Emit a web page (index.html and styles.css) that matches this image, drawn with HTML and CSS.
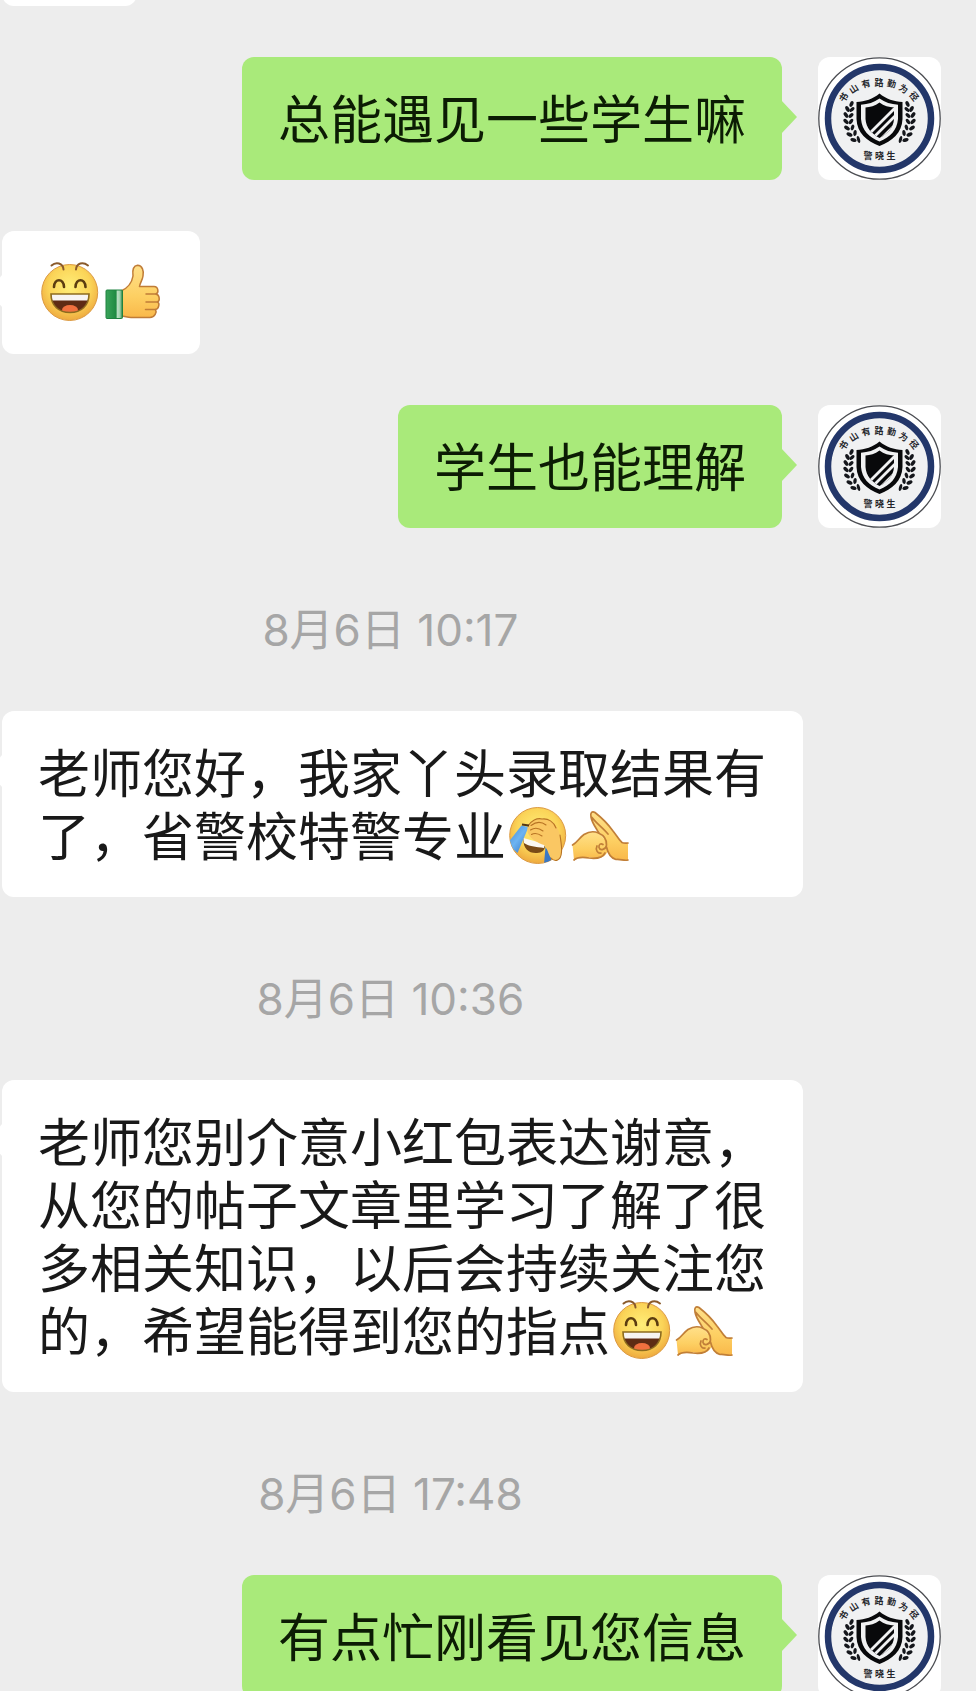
FILE: index.html
```html
<!DOCTYPE html>
<html lang="zh-CN">
<head>
<meta charset="utf-8">
<meta name="viewport" content="width=device-width, initial-scale=1">
<title>聊天</title>
<link rel="stylesheet" href="styles.css">
</head>
<body>
<svg class="sprites" aria-hidden="true">
  <defs>
    <radialGradient id="skin" cx="50%" cy="40%" r="62%">
      <stop offset="0" stop-color="#ffee78"/><stop offset="0.6" stop-color="#fbd458"/><stop offset="1" stop-color="#eda63c"/>
    </radialGradient>
    <linearGradient id="hand" x1="0" y1="0" x2="0" y2="1">
      <stop offset="0" stop-color="#ffe08a"/><stop offset="0.6" stop-color="#fdcf62"/><stop offset="1" stop-color="#f9b84a"/>
    </linearGradient>
    <linearGradient id="cuff" x1="0" y1="0" x2="1" y2="0">
      <stop offset="0" stop-color="#3aa45a"/><stop offset="0.6" stop-color="#1f8a42"/><stop offset="0.7" stop-color="#b9dfc3"/><stop offset="0.85" stop-color="#9ad0a8"/><stop offset="1" stop-color="#1d7d3b"/>
    </linearGradient>
    <linearGradient id="tear" x1="0" y1="0" x2="1" y2="1">
      <stop offset="0" stop-color="#3f83d0"/><stop offset="0.5" stop-color="#6db4f2"/><stop offset="1" stop-color="#2f6fc0"/>
    </linearGradient>
    <clipPath id="mouth-clip"><path d="M13 33H51C51 45 43 51.500 32 51.500S13 45 13 33Z"/></clipPath>
    <clipPath id="shield-clip"><path d="M61.500 45.500C57 49 52 50 47.500 50.500V62C48 71 54 77 61.500 81C69 77 75.500 71 76 62V50.500C71 50 66 49 61.500 45.500Z"/></clipPath>
    <clipPath id="face-clip"><circle cx="32" cy="31" r="28.500"/></clipPath>
  </defs>

  <symbol id="laugh" viewBox="0 -2 63 63">
    <circle cx="31.700" cy="31.500" r="28" fill="url(#skin)" stroke="#dc9a42" stroke-width="1"/>
    <g fill="none" stroke-linecap="round">
      <path d="M13.500 4.500C18 0.500 25 2 25.500 8.500M50 4.500C45 0.500 38.500 2 38 8.500" stroke="#8a5a2b" stroke-width="2"/>
      <path d="M16 26C16.500 17 25.500 17 26 26M37.500 26C38 17 47 17 47.500 26" stroke="#5c3d10" stroke-width="2.600"/>
    </g>
    <path d="M13 33H51C51 45 43 51.500 32 51.500S13 45 13 33Z" fill="#5e2b14"/>
    <g clip-path="url(#mouth-clip)">
      <path d="M13 33H51V39.500H13Z" fill="#f7f4f2"/>
      <ellipse cx="32" cy="49" rx="8" ry="5" fill="#f0703f"/>
    </g>
    <path d="M13 33H51C51 45 43 51.500 32 51.500S13 45 13 33Z" fill="none" stroke="#8d6b1f" stroke-width="1.600"/>
  </symbol>

  <symbol id="thumb" viewBox="0 -2 63 63">
    <path d="M20 30C27 27 31 21 32 15C31.500 11 31 5 36.500 4.300C41.500 4.500 43 10 42 15C41.500 19 39 22 38.500 25.500H53C57.500 25.500 58 32 55 33C59 34 59 40 56.500 41C59 42 58 48 54.500 48.500C56 51 54 56.500 49 56.500H30C26 56.500 24 55 20 55Z" fill="url(#hand)" stroke="#c07c37" stroke-width="1.500" stroke-linejoin="round"/>
    <path d="M45 33H55M45 41H56.500M44.500 48.500H54.500" fill="none" stroke="#c07c37" stroke-width="1.500" stroke-linecap="round"/>
    <rect x="5" y="29" width="16.500" height="28.500" rx="1" fill="url(#cuff)" stroke="#1f8240" stroke-width="1"/>
  </symbol>

  <symbol id="facepalm" viewBox="0 -2 63 63">
    <circle cx="31.700" cy="31.500" r="28" fill="url(#skin)" stroke="#dc9a42" stroke-width="1"/>
    <g clip-path="url(#face-clip)">
      <path d="M17.500 35C17 45 23 49.500 31 49C36 49 39 46 39 42Z" fill="#7a4b17"/>
      <path d="M17.500 34L39 40L38 44C30 43 22 42 18 39Z" fill="#fbf8f2"/>
      <path d="M15.500 21.500L22.500 23L11.500 49L1 40Z" fill="url(#tear)"/>
      <path d="M39.500 43L46 52L44 60H38Z" fill="#3a78c4"/>
    </g>
    <path d="M22 22C25 17 31 13.500 37 15C45 14 52 21 54 31C55 38 56 43 55.500 48C55 57 49 58.500 45 54C42 50 42 45 38 41C32 39 25 35 23 31C21 28 21 25 22 22Z" fill="#fac763"/>
    <path d="M22 22C25 17 31 13.500 36 15M25 21.500C31 17 36 18 40 21M24.500 26C29 23 33 24 37 27M25.500 30.500C29 28.500 33 30 36 32M36 15C42 14 48 18 50 24M54 31C55 38 56 43 55.500 48C55 57 49 58.500 45 54" fill="none" stroke="#b87424" stroke-width="1.100" stroke-linecap="round"/>
    <path d="M16 20.500L23 21.500" stroke="#543714" stroke-width="1.800"/>
  </symbol>

  <symbol id="salute" viewBox="0 -2 63 63">
    <path d="M3.500 41C8 39 10 34 15 30.500C19 28 26 27 31 29.500L40 42C39 50 35 54 28 54C22 54 17 52.500 12 53.500C9 54 7 56 5 56Z" fill="url(#hand)"/>
    <path d="M22 13C21 9 23 6.500 26 8.500C33 14 39 20 44 27C48 32 50 36 53 38.500C55 39.500 57 39 59 39V56C54 57 51 55.500 46 55.500C42 54 39 50 38 45L34 33C30 27 24 20 22 13Z" fill="url(#hand)"/>
    <path d="M3.500 41C8 39 10 34 15 30.500C19 28 25 27 29.500 29C34 31 38 34 37.500 41C37 46 31 47 30 43.500C29.500 40 32 39 34 40.500M5 56C9 52.500 14 53 20 54C28 55 34 53 36 49M28 42C26 46 29 50 32 49" fill="none" stroke="#c17f38" stroke-width="1.700" stroke-linecap="round"/>
    <path d="M30 29C27 24 23 19 22 13C21 9 23 6.500 26 8.500C33 14 39 20 44 27C48 32 50 36 53 38.500C55 39.500 57 39 59 39M23 13.500C27 19 34 24 39 30M37.500 43C39 50 42 54 47 55.500C52 55 55 57 59 56" fill="none" stroke="#c17f38" stroke-width="1.700" stroke-linecap="round"/>
  </symbol>

  <symbol id="leaves" viewBox="0 0 123 123">
    <g fill="#15171c">
      <ellipse cx="33.500" cy="47" rx="1.800" ry="3" transform="rotate(25 33.500 47)"/>
      <ellipse cx="29.500" cy="52" rx="1.800" ry="3.200" transform="rotate(-30 29.500 52)"/>
      <ellipse cx="34" cy="52.500" rx="1.700" ry="3" transform="rotate(50 34 52.500)"/>
      <ellipse cx="28" cy="58" rx="1.800" ry="3.200" transform="rotate(-35 28 58)"/>
      <ellipse cx="33" cy="58.500" rx="1.700" ry="3" transform="rotate(45 33 58.500)"/>
      <ellipse cx="28" cy="64.500" rx="1.800" ry="3.200" transform="rotate(-45 28 64.500)"/>
      <ellipse cx="33" cy="64.500" rx="1.700" ry="3" transform="rotate(35 33 64.500)"/>
      <ellipse cx="29" cy="71" rx="1.800" ry="3.200" transform="rotate(-55 29 71)"/>
      <ellipse cx="34.500" cy="70.500" rx="1.700" ry="3" transform="rotate(20 34.500 70.500)"/>
      <ellipse cx="31.500" cy="77.500" rx="1.800" ry="3.200" transform="rotate(-65 31.500 77.500)"/>
      <ellipse cx="37" cy="76" rx="1.700" ry="3" transform="rotate(5 37 76)"/>
      <ellipse cx="35.500" cy="83" rx="1.800" ry="3.200" transform="rotate(-70 35.500 83)"/>
      <ellipse cx="40.500" cy="82.500" rx="1.500" ry="3.500" transform="rotate(-15 40.500 82.500)"/>
    </g>
  </symbol>

  <symbol id="emblem" viewBox="0 0 123 123">
    <circle cx="61.500" cy="61.500" r="60.700" fill="#fff" stroke="#4b4d52" stroke-width="1.300"/>
    <circle cx="61.500" cy="61.500" r="51.500" fill="#f0f1f2" stroke="#23376a" stroke-width="6.500"/>
    <g class="motto">
      <text transform="translate(26 40.500) rotate(-57)" y="3">书</text>
      <text transform="translate(36 32) rotate(-33)" y="3">山</text>
      <text transform="translate(48 27) rotate(-15)" y="3">有</text>
      <text transform="translate(61 25.500)" y="3">路</text>
      <text transform="translate(73.500 27) rotate(12)" y="3">勤</text>
      <text transform="translate(85.500 32) rotate(32)" y="3">为</text>
      <text transform="translate(96 39.500) rotate(52)" y="3">径</text>
      <text x="50" y="102">警</text>
      <text x="61.500" y="102">晓</text>
      <text x="73" y="102">生</text>
    </g>
    <use href="#leaves" width="123" height="123"/>
    <use href="#leaves" width="123" height="123" transform="translate(123 0) scale(-1 1)"/>
    <path d="M61.500 36.500C55 42 47 44.500 38.500 45V62C39 76 49 84 61.500 89C74 84 84 76 84.500 62V45C76 44.500 68 42 61.500 36.500Z" fill="#08090b"/>
    <path d="M61.500 41.500C56 45.500 50 47.200 43 47.700V62C44 73.500 51 80 61.500 84.500C72 80 79 73.500 80 62V47.700C73 47.200 67 45.500 61.500 41.500Z" fill="#f0f1f2"/>
    <path d="M61.500 45.500C57 49 52 50 47.500 50.500V62C48 71 54 77 61.500 81C69 77 75.500 71 76 62V50.500C71 50 66 49 61.500 45.500Z" fill="#08090b"/>
    <g clip-path="url(#shield-clip)" stroke="#f0f1f2" stroke-width="2.800">
      <path d="M80 48L47 81M82 54L52 84M84 61L56 89"/>
    </g>
  </symbol>
</svg>

<main class="chat">
  <div class="row received first">
    <p class="bubble"><svg class="emoji" role="img" aria-label="憨笑"><use href="#laugh"/></svg></p>
  </div>
  <div class="row sent">
    <p class="bubble">总能遇见一些学生嘛</p>
    <svg class="avatar" role="img" aria-label="头像"><use href="#emblem"/></svg>
  </div>
  <div class="row received">
    <p class="bubble"><svg class="emoji" role="img" aria-label="憨笑"><use href="#laugh"/></svg><svg class="emoji" role="img" aria-label="强"><use href="#thumb"/></svg></p>
  </div>
  <div class="row sent">
    <p class="bubble">学生也能理解</p>
    <svg class="avatar" role="img" aria-label="头像"><use href="#emblem"/></svg>
  </div>
  <time class="stamp">8月6日 10:17</time>
  <div class="row received">
    <p class="bubble">老师您好，我家丫头录取结果有了，省警校特警专业<svg class="emoji" role="img" aria-label="捂脸"><use href="#facepalm"/></svg><svg class="emoji" role="img" aria-label="抱拳"><use href="#salute"/></svg></p>
  </div>
  <time class="stamp">8月6日 10:36</time>
  <div class="row received">
    <p class="bubble">老师您别介意小红包表达谢意，从您的帖子文章里学习了解了很多相关知识，以后会持续关注您的，希望能得到您的指点<svg class="emoji" role="img" aria-label="憨笑"><use href="#laugh"/></svg><svg class="emoji" role="img" aria-label="抱拳"><use href="#salute"/></svg></p>
  </div>
  <time class="stamp">8月6日 17:48</time>
  <div class="row sent">
    <p class="bubble">有点忙刚看见您信息</p>
    <svg class="avatar" role="img" aria-label="头像"><use href="#emblem"/></svg>
  </div>
</main>
</body>
</html>
```

FILE: styles.css
```css
* {
  box-sizing: border-box;
}

body {
  margin: 0;
  background: #ededed;
  color: #191919;
  font-family: Inter, "Noto Sans CJK SC", sans-serif;
}

.sprites {
  position: absolute;
  width: 0;
  height: 0;
}

.chat {
  display: flex;
  flex-direction: column;
  gap: 51px;
  height: 100vh;
  overflow: hidden;
}

.row {
  display: flex;
  flex: none;
  align-items: flex-start;
  gap: 36px;
  padding: 0 35px 0 2px;
}

/* The oldest message is scrolled almost out of view. */
.first {
  margin-top: -117px;
}

.sent {
  justify-content: flex-end;
}

.bubble {
  position: relative;
  max-width: 801px;
  margin: 0;
  padding: 28px 36px 32px;
  border-radius: 12px;
  background: #fff;
  font-family: "Noto Sans CJK SC", sans-serif;
  font-size: 52px;
  line-height: 63px;
}

.bubble::before {
  content: "";
  position: absolute;
  top: 43px;
  left: -15px;
  width: 16px;
  height: 34px;
  background: inherit;
  clip-path: polygon(100% 0, 0 50%, 100% 100%);
}

.sent .bubble {
  background: #a9ea7a;
  color: #0c1c04;
}

.sent .bubble::before {
  left: auto;
  right: -15px;
  clip-path: polygon(0 0, 100% 50%, 0 100%);
}

.emoji {
  width: 63px;
  height: 63px;
  vertical-align: top;
}

.avatar {
  flex: none;
  width: 123px;
  height: 123px;
  border-radius: 12px;
  background: #fff;
}

.motto {
  fill: #24262b;
  font-family: "Noto Sans CJK SC", sans-serif;
  font-size: 9px;
  font-weight: 700;
  text-anchor: middle;
}

.stamp {
  flex: none;
  width: 80%;
  padding-top: 21px;
  color: #a6a6a6;
  font-size: 44px;
  line-height: 60px;
  text-align: center;
}
```
